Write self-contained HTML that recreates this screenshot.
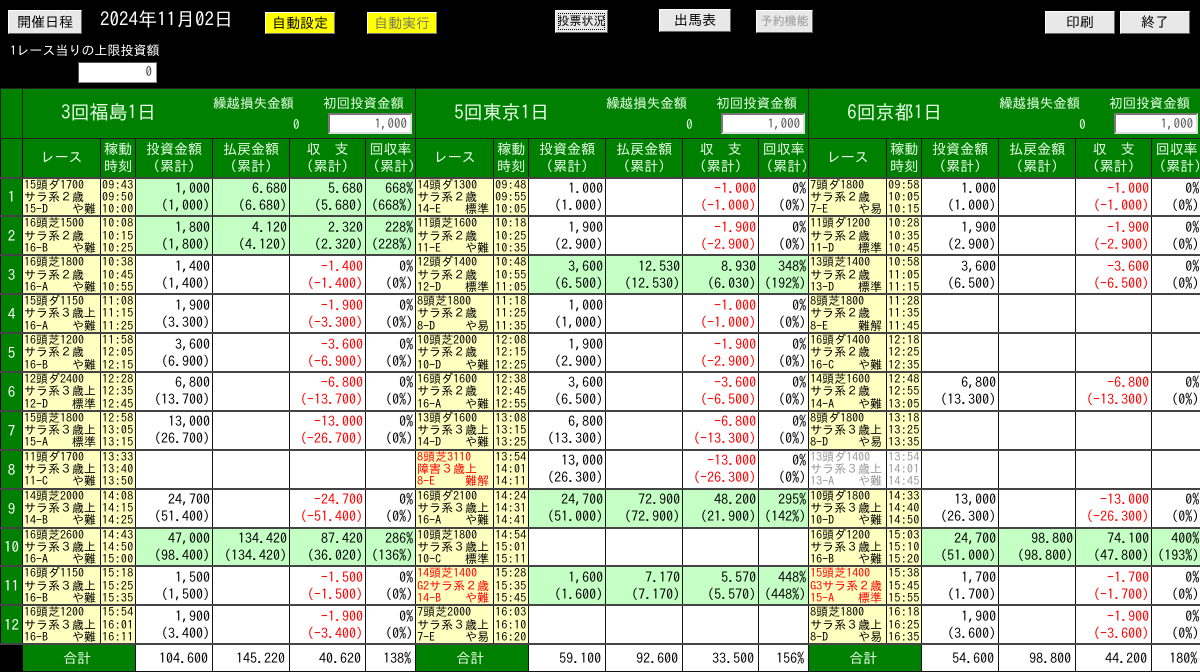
<!DOCTYPE html>
<html><head><meta charset="utf-8">
<style>
*{margin:0;padding:0;box-sizing:border-box}
body{width:1200px;height:672px;background:#000;overflow:hidden;position:relative;font-family:"IPAGothic","Liberation Sans","Noto Sans CJK JP",sans-serif;color:#000}
.btn{position:absolute;background:#e8e8e8;border:1px solid #fff;border-right-color:#666;border-bottom-color:#666;font-size:14px;text-align:center;line-height:21px;height:23px;white-space:nowrap;overflow:hidden}
.yb{position:absolute;background:#ffff00;border:1px solid #fff;border-right-color:#777;border-bottom-color:#777;font-size:14px;text-align:center;line-height:20px;height:22px}
.inp{position:absolute;background:#fff;border:1px solid #888;border-top-color:#555;border-left-color:#555;text-align:right;font-size:13px;padding-right:4px;line-height:18px;color:#444}
table{position:absolute;left:0;top:88px;width:1201px;border-collapse:collapse;table-layout:fixed}
td{border:1px solid #111;overflow:hidden;white-space:nowrap;vertical-align:middle;background:#fff}
tr.h1 td{height:50px;background:#008000;border-color:#222}
tr.h2 td{height:39px;background:#008000;color:#e8ffe8;text-align:center;font-size:14px;line-height:17px}
tr.d td{height:38px;border-top:2px solid #444;border-bottom:2px solid #444}
td.no{background:#008000;color:#fff;text-align:center;font-size:15px;border-color:#000}
td.blk{background:#000;border-color:#000}
td.r{background:#ffffc0;font-size:12px;line-height:12.3px;padding-left:1px}
td.r b{font-weight:normal;letter-spacing:0.8px}
td.r span{float:right;padding-right:4px}
td.t{background:#ffffc0;font-size:12px;line-height:12.3px;padding-left:1px;letter-spacing:0.3px}
td.n{text-align:right;font-size:14px;line-height:17px;padding-right:2px}
td.g{background:#c4ffc4}
.m{color:#f00}
td.rr{color:#f00}
td.gy{background:#fff;color:#999}
tr.tot td{height:27px;font-size:14px;text-align:right;padding-right:4px}
td.gt{background:#008000!important;color:#e8ffe8;text-align:center!important;font-size:16px}
.hd{position:relative;height:48px;color:#e8ffe8}
.hd .nm{position:absolute;left:38px;top:13px;font-size:19px}
.hd .k1{position:absolute;left:190px;top:6px;font-size:13.5px}
.hd .k0{position:absolute;left:270px;top:28px;font-size:13px}
.hd .k2{position:absolute;left:300px;top:6px;font-size:13.5px}
.hd .in{position:absolute;left:305px;top:23px;width:84px;height:21px;background:#fff;border:2px solid #777;border-right-color:#ddd;border-bottom-color:#ddd;color:#555;text-align:right;font-size:13px;padding-right:3px;line-height:17px}
</style></head><body>
<div class="btn" style="left:8px;top:10px;width:74px;height:24px;line-height:22px">開催日程</div>
<div style="position:absolute;left:100px;top:10px;color:#fff;font-size:19px">2024年11月02日</div>
<div class="yb" style="left:265px;top:12px;width:70px">自動設定</div>
<div class="yb" style="left:367px;top:12px;width:70px;color:#776">自動実行</div>
<div class="btn" style="left:555px;top:10px;width:53px;font-size:12px;outline:1px dotted #000;outline-offset:-4px">投票状況</div>
<div class="btn" style="left:659px;top:9px;width:72px">出馬表</div>
<div class="btn" style="left:756px;top:10px;width:57px;color:#999;font-size:12px">予約機能</div>
<div class="btn" style="left:1045px;top:11px;width:70px">印刷</div>
<div class="btn" style="left:1120px;top:11px;width:70px">終了</div>
<div style="position:absolute;left:10px;top:44px;color:#fff;font-size:13px">1レース当りの上限投資額</div>
<div class="inp" style="left:78px;top:62px;width:79px;height:21px">0</div>

<table>
<colgroup><col style="width:22px">
<col style="width:78px"><col style="width:35px"><col style="width:77px"><col style="width:77px"><col style="width:76px"><col style="width:50px">
<col style="width:78px"><col style="width:35px"><col style="width:77px"><col style="width:77px"><col style="width:76px"><col style="width:50px">
<col style="width:78px"><col style="width:35px"><col style="width:77px"><col style="width:77px"><col style="width:76px"><col style="width:50px">
</colgroup>
<tr class="h1"><td class="blk"></td>
<td colspan="6"><div class="hd"><div class="nm">3回福島1日</div><div class="k1">繰越損失金額</div><div class="k0">0</div><div class="k2">初回投資金額</div><div class="in">1,000</div></div></td>
<td colspan="6"><div class="hd"><div class="nm">5回東京1日</div><div class="k1">繰越損失金額</div><div class="k0">0</div><div class="k2">初回投資金額</div><div class="in">1,000</div></div></td>
<td colspan="6"><div class="hd"><div class="nm">6回京都1日</div><div class="k1">繰越損失金額</div><div class="k0">0</div><div class="k2">初回投資金額</div><div class="in">1,000</div></div></td>
</tr>
<tr class="h2"><td class="blk"></td>
<td>レース</td><td>稼動<br>時刻</td><td>投資金額<br>（累計）</td><td>払戻金額<br>（累計）</td><td>収　支<br>（累計）</td><td>回収率<br>（累計）</td>
<td>レース</td><td>稼動<br>時刻</td><td>投資金額<br>（累計）</td><td>払戻金額<br>（累計）</td><td>収　支<br>（累計）</td><td>回収率<br>（累計）</td>
<td>レース</td><td>稼動<br>時刻</td><td>投資金額<br>（累計）</td><td>払戻金額<br>（累計）</td><td>収　支<br>（累計）</td><td>回収率<br>（累計）</td>
</tr>
<tr class="d"><td class="no">1</td>
<td class="r">15頭ダ1700<br>サラ系２歳<br>15-D<span>や難</span></td><td class="t">09:43<br>09:50<br>10:00</td><td class="n g">1,000<br>(1,000)</td><td class="n g">6.680<br>(6.680)</td><td class="n g">5.680<br>(5.680)</td><td class="n g">668%<br>(668%)</td>
<td class="r">14頭ダ1300<br>サラ系２歳<br>14-E<span>標準</span></td><td class="t">09:48<br>09:55<br>10:05</td><td class="n">1.000<br>(1.000)</td><td class="n"></td><td class="n m">−1.000<br>(−1.000)</td><td class="n">0%<br>(0%)</td>
<td class="r">7頭ダ1800<br>サラ系２歳<br>7-E<span>や易</span></td><td class="t">09:58<br>10:05<br>10:15</td><td class="n">1.000<br>(1.000)</td><td class="n"></td><td class="n m">−1.000<br>(−1.000)</td><td class="n">0%<br>(0%)</td>
</tr>
<tr class="d"><td class="no">2</td>
<td class="r">16頭芝1500<br>サラ系２歳<br>16-B<span>や難</span></td><td class="t">10:08<br>10:15<br>10:25</td><td class="n g">1,800<br>(1,800)</td><td class="n g">4.120<br>(4.120)</td><td class="n g">2.320<br>(2.320)</td><td class="n g">228%<br>(228%)</td>
<td class="r">11頭芝1600<br>サラ系２歳<br>11-E<span>や難</span></td><td class="t">10:18<br>10:25<br>10:35</td><td class="n">1,900<br>(2.900)</td><td class="n"></td><td class="n m">−1.900<br>(−2.900)</td><td class="n">0%<br>(0%)</td>
<td class="r">11頭ダ1200<br>サラ系２歳<br>11-D<span>標準</span></td><td class="t">10:28<br>10:35<br>10:45</td><td class="n">1,900<br>(2.900)</td><td class="n"></td><td class="n m">−1.900<br>(−2.900)</td><td class="n">0%<br>(0%)</td>
</tr>
<tr class="d"><td class="no">3</td>
<td class="r">16頭芝1800<br>サラ系２歳<br>16-A<span>や難</span></td><td class="t">10:38<br>10:45<br>10:55</td><td class="n">1,400<br>(1,400)</td><td class="n"></td><td class="n m">−1.400<br>(−1.400)</td><td class="n">0%<br>(0%)</td>
<td class="r">12頭ダ1400<br>サラ系２歳<br>12-D<span>標準</span></td><td class="t">10:48<br>10:55<br>11:05</td><td class="n g">3,600<br>(6.500)</td><td class="n g">12.530<br>(12.530)</td><td class="n g">8.930<br>(6.030)</td><td class="n g">348%<br>(192%)</td>
<td class="r">13頭芝1400<br>サラ系２歳<br>13-D<span>標準</span></td><td class="t">10:58<br>11:05<br>11:15</td><td class="n">3,600<br>(6.500)</td><td class="n"></td><td class="n m">−3.600<br>(−6.500)</td><td class="n">0%<br>(0%)</td>
</tr>
<tr class="d"><td class="no">4</td>
<td class="r">15頭ダ1150<br>サラ系３歳上<br>16-A<span>や難</span></td><td class="t">11:08<br>11:15<br>11:25</td><td class="n">1,900<br>(3.300)</td><td class="n"></td><td class="n m">−1.900<br>(−3.300)</td><td class="n">0%<br>(0%)</td>
<td class="r">8頭芝1800<br>サラ系２歳<br>8-D<span>や易</span></td><td class="t">11:18<br>11:25<br>11:35</td><td class="n">1,000<br>(1,000)</td><td class="n"></td><td class="n m">−1.000<br>(−1.000)</td><td class="n">0%<br>(0%)</td>
<td class="r">8頭芝1800<br>サラ系２歳<br>8-E<span>難解</span></td><td class="t">11:28<br>11:35<br>11:45</td><td class="n"></td><td class="n"></td><td class="n"></td><td class="n"></td>
</tr>
<tr class="d"><td class="no">5</td>
<td class="r">16頭芝1200<br>サラ系２歳<br>16-B<span>や難</span></td><td class="t">11:58<br>12:05<br>12:15</td><td class="n">3,600<br>(6.900)</td><td class="n"></td><td class="n m">−3.600<br>(−6.900)</td><td class="n">0%<br>(0%)</td>
<td class="r">10頭芝2000<br>サラ系２歳<br>10-D<span>や難</span></td><td class="t">12:08<br>12:15<br>12:25</td><td class="n">1,900<br>(2.900)</td><td class="n"></td><td class="n m">−1.900<br>(−2.900)</td><td class="n">0%<br>(0%)</td>
<td class="r">16頭ダ1400<br>サラ系２歳<br>16-C<span>や難</span></td><td class="t">12:18<br>12:25<br>12:35</td><td class="n"></td><td class="n"></td><td class="n"></td><td class="n"></td>
</tr>
<tr class="d"><td class="no">6</td>
<td class="r">12頭ダ2400<br>サラ系３歳上<br>12-D<span>標準</span></td><td class="t">12:28<br>12:35<br>12:45</td><td class="n">6,800<br>(13.700)</td><td class="n"></td><td class="n m">−6.800<br>(−13.700)</td><td class="n">0%<br>(0%)</td>
<td class="r">16頭ダ1600<br>サラ系２歳<br>16-A<span>や難</span></td><td class="t">12:38<br>12:45<br>12:55</td><td class="n">3,600<br>(6.500)</td><td class="n"></td><td class="n m">−3.600<br>(−6.500)</td><td class="n">0%<br>(0%)</td>
<td class="r">14頭芝1600<br>サラ系２歳<br>14-A<span>や難</span></td><td class="t">12:48<br>12:55<br>13:05</td><td class="n">6,800<br>(13.300)</td><td class="n"></td><td class="n m">−6.800<br>(−13.300)</td><td class="n">0%<br>(0%)</td>
</tr>
<tr class="d"><td class="no">7</td>
<td class="r">15頭芝1800<br>サラ系３歳上<br>15-A<span>標準</span></td><td class="t">12:58<br>13:05<br>13:15</td><td class="n">13,000<br>(26.700)</td><td class="n"></td><td class="n m">−13.000<br>(−26.700)</td><td class="n">0%<br>(0%)</td>
<td class="r">13頭ダ1600<br>サラ系３歳上<br>14-D<span>や難</span></td><td class="t">13:08<br>13:15<br>13:25</td><td class="n">6,800<br>(13.300)</td><td class="n"></td><td class="n m">−6.800<br>(−13.300)</td><td class="n">0%<br>(0%)</td>
<td class="r">8頭ダ1800<br>サラ系３歳上<br>8-D<span>や易</span></td><td class="t">13:18<br>13:25<br>13:35</td><td class="n"></td><td class="n"></td><td class="n"></td><td class="n"></td>
</tr>
<tr class="d"><td class="no">8</td>
<td class="r">11頭ダ1700<br>サラ系３歳上<br>11-C<span>や難</span></td><td class="t">13:33<br>13:40<br>13:50</td><td class="n"></td><td class="n"></td><td class="n"></td><td class="n"></td>
<td class="r rr">8頭芝3110<br>障害３歳上<br>8-E<span>難解</span></td><td class="t">13:54<br>14:01<br>14:11</td><td class="n">13,000<br>(26.300)</td><td class="n"></td><td class="n m">−13.000<br>(−26.300)</td><td class="n">0%<br>(0%)</td>
<td class="r gy">13頭ダ1400<br>サラ系３歳上<br>13-A<span>や難</span></td><td class="t gy">13:54<br>14:01<br>14:45</td><td class="n"></td><td class="n"></td><td class="n"></td><td class="n"></td>
</tr>
<tr class="d"><td class="no">9</td>
<td class="r">14頭芝2000<br>サラ系３歳上<br>14-B<span>や難</span></td><td class="t">14:08<br>14:15<br>14:25</td><td class="n">24,700<br>(51.400)</td><td class="n"></td><td class="n m">−24.700<br>(−51.400)</td><td class="n">0%<br>(0%)</td>
<td class="r">16頭ダ2100<br>サラ系３歳上<br>16-A<span>や難</span></td><td class="t">14:24<br>14:31<br>14:41</td><td class="n g">24,700<br>(51.000)</td><td class="n g">72.900<br>(72.900)</td><td class="n g">48.200<br>(21.900)</td><td class="n g">295%<br>(142%)</td>
<td class="r">10頭ダ1800<br>サラ系３歳上<br>10-D<span>や難</span></td><td class="t">14:33<br>14:40<br>14:50</td><td class="n">13,000<br>(26.300)</td><td class="n"></td><td class="n m">−13.000<br>(−26.300)</td><td class="n">0%<br>(0%)</td>
</tr>
<tr class="d"><td class="no">10</td>
<td class="r">16頭芝2600<br>サラ系３歳上<br>16-A<span>や難</span></td><td class="t">14:43<br>14:50<br>15:00</td><td class="n g">47,000<br>(98.400)</td><td class="n g">134.420<br>(134.420)</td><td class="n g">87.420<br>(36.020)</td><td class="n g">286%<br>(136%)</td>
<td class="r">10頭芝1800<br>サラ系３歳上<br>10-C<span>標準</span></td><td class="t">14:54<br>15:01<br>15:11</td><td class="n"></td><td class="n"></td><td class="n"></td><td class="n"></td>
<td class="r">16頭ダ1200<br>サラ系３歳上<br>16-B<span>や難</span></td><td class="t">15:03<br>15:10<br>15:20</td><td class="n g">24,700<br>(51.000)</td><td class="n g">98.800<br>(98.800)</td><td class="n g">74.100<br>(47.800)</td><td class="n g">400%<br>(193%)</td>
</tr>
<tr class="d"><td class="no">11</td>
<td class="r">16頭ダ1150<br>サラ系３歳上<br>16-B<span>や難</span></td><td class="t">15:18<br>15:25<br>15:35</td><td class="n">1,500<br>(1,500)</td><td class="n"></td><td class="n m">−1.500<br>(−1.500)</td><td class="n">0%<br>(0%)</td>
<td class="r rr">14頭芝1400<br>G2サラ系２歳<br>14-B<span>や難</span></td><td class="t">15:28<br>15:35<br>15:45</td><td class="n g">1,600<br>(1.600)</td><td class="n g">7.170<br>(7.170)</td><td class="n g">5.570<br>(5.570)</td><td class="n g">448%<br>(448%)</td>
<td class="r rr">15頭芝1400<br>G3サラ系２歳<br>15-A<span>標準</span></td><td class="t">15:38<br>15:45<br>15:55</td><td class="n">1,700<br>(1.700)</td><td class="n"></td><td class="n m">−1.700<br>(−1.700)</td><td class="n">0%<br>(0%)</td>
</tr>
<tr class="d"><td class="no">12</td>
<td class="r">16頭芝1200<br>サラ系３歳上<br>16-B<span>や難</span></td><td class="t">15:54<br>16:01<br>16:11</td><td class="n">1,900<br>(3.400)</td><td class="n"></td><td class="n m">−1.900<br>(−3.400)</td><td class="n">0%<br>(0%)</td>
<td class="r">7頭芝2000<br>サラ系３歳上<br>7-E<span>や易</span></td><td class="t">16:03<br>16:10<br>16:20</td><td class="n"></td><td class="n"></td><td class="n"></td><td class="n"></td>
<td class="r">8頭芝1800<br>サラ系３歳上<br>8-D<span>や易</span></td><td class="t">16:18<br>16:25<br>16:35</td><td class="n">1,900<br>(3.600)</td><td class="n"></td><td class="n m">−1.900<br>(−3.600)</td><td class="n">0%<br>(0%)</td>
</tr>
<tr class="tot"><td class="blk"></td>
<td colspan="2" class="gt">合計</td><td>104.600</td><td>145.220</td><td>40.620</td><td>138%</td>
<td colspan="2" class="gt">合計</td><td>59.100</td><td>92.600</td><td>33.500</td><td>156%</td>
<td colspan="2" class="gt">合計</td><td>54.600</td><td>98.800</td><td>44.200</td><td>180%</td>
</tr>
</table>
</body></html>
